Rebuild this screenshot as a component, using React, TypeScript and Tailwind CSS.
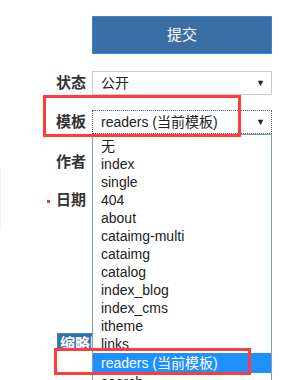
import React from "react";

const items = [
  "无",
  "index",
  "single",
  "404",
  "about",
  "cataimg-multi",
  "cataimg",
  "catalog",
  "index_blog",
  "index_cms",
  "itheme",
  "links",
  "readers (当前模板)",
  "search",
];

const font = { fontFamily: '"Liberation Sans", "Noto Sans CJK SC", sans-serif' };

function Label({ children, dot }: { children: React.ReactNode; dot?: boolean }) {
  return (
    <div className="relative w-[92px] pr-[6px] flex justify-end items-center text-[15px] font-bold text-[#333]">
      {dot && <span className="absolute left-[47px] top-[12px] w-[3px] h-[3px] bg-[#ff3333]" />}
      {children}
    </div>
  );
}

export default function App() {
  return (
    <div className="relative w-[282px] h-[380px] overflow-hidden bg-white" style={font}>
      <div className="absolute left-0 top-[167px] w-px h-[63px] bg-[#f2f2f2]" />
      <div className="pt-[16px] pl-[92px]">
        <div className="w-[180px] h-[38px] bg-[#3b6ea5] border border-[#2a8fd0] flex items-center justify-center text-white text-[15px]">
          提交
        </div>
      </div>

      <div className="flex mt-[17px] h-[24px]">
        <Label>状态</Label>
        <div className="w-[180px] h-[24px] border border-[#cccccc] flex items-center justify-between pl-[8px] pr-[6px] text-[14px] text-[#222]">
          <span>公开</span>
          <span className="text-[9px] leading-none">▼</span>
        </div>
      </div>

      <div className="flex mt-[15px] h-[24px]">
        <Label>模板</Label>
        <div className="w-[180px] h-[24px] border border-dotted border-[#555] flex items-center justify-between pl-[8px] pr-[6px] text-[14px] text-[#222]">
          <span>readers (当前模板)</span>
          <span className="text-[9px] leading-none">▼</span>
        </div>
      </div>

      <div className="flex mt-[16px] h-[24px]">
        <Label>作者</Label>
      </div>

      <div className="flex mt-[14px] h-[24px]">
        <Label dot>日期</Label>
      </div>

      <div className="mt-[121px] ml-[57px] w-[60px] h-[16px] bg-[#3b6ea5] border border-[#2a8fd0] text-white text-[15px] font-bold leading-[20px] pl-[2px] overflow-hidden whitespace-nowrap">
        缩略图
      </div>

      {/* open dropdown list */}
      <div className="absolute left-[92px] top-[134px] w-[180px] h-[260px] bg-white border border-[#7f9db9] text-[14px] text-[#222]">
        <div className="pt-[2px]">
          {items.map((it) =>
            it === "readers (当前模板)" ? (
              <div key={it} className="h-[20px] leading-[20px] pl-[8px] bg-[#1e90ff] text-white">
                {it}
              </div>
            ) : (
              <div key={it} className="h-[18px] leading-[18px] pl-[8px]">
                {it}
              </div>
            )
          )}
        </div>
      </div>

      {/* annotation boxes */}
      <div className="absolute left-[43px] top-[95px] w-[198px] h-[42px] border-[3px] border-[#ff3b3b]" />
      <div className="absolute left-[54px] top-[348px] w-[197px] h-[27px] border-[3px] border-[#ff3b3b]" />
    </div>
  );
}
